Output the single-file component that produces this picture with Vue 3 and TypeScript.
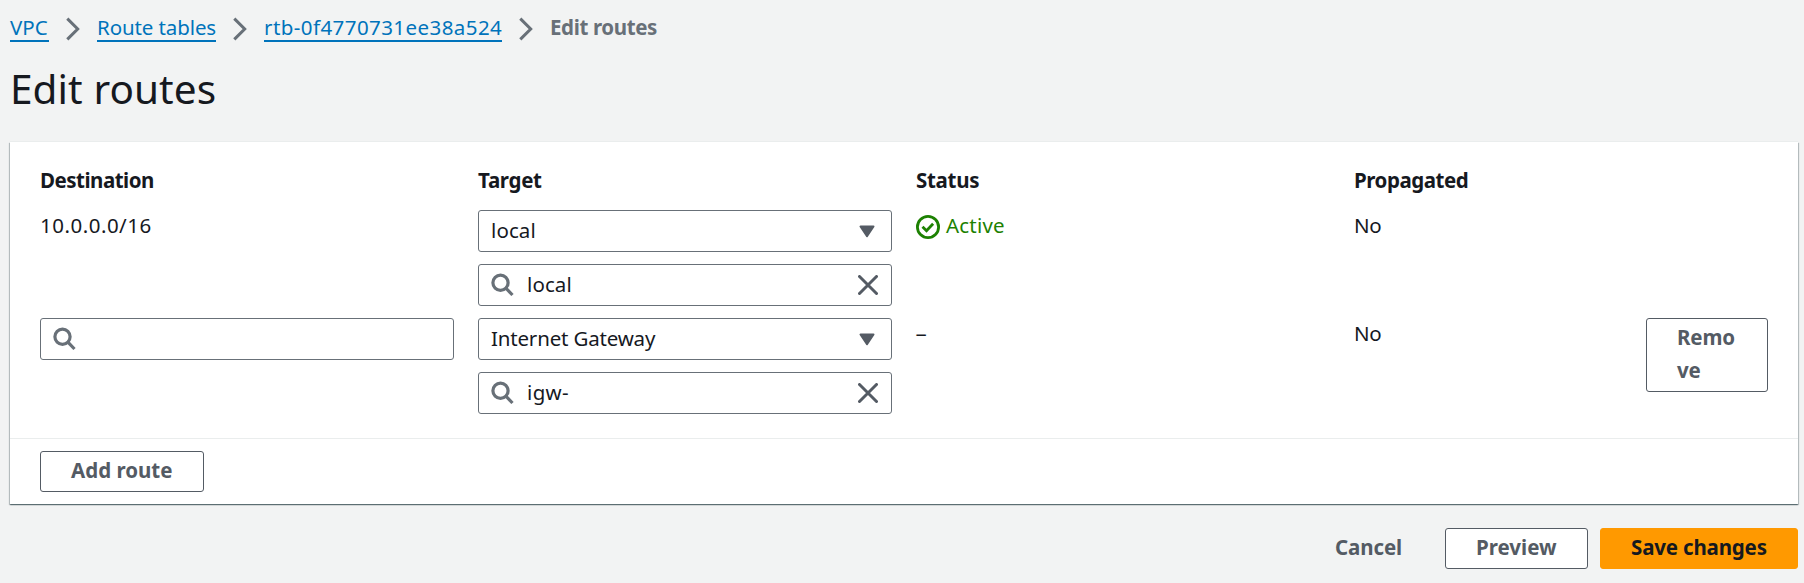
<script setup lang="ts">
import { ref } from 'vue'

interface Crumb {
  label: string
  cls: string
}

interface Route {
  editable: boolean
  destination: string
  targetType: string
  target: string
  targetCls: string
  active: boolean
  propagated: string
}

const crumbs: Crumb[] = [
  { label: 'VPC', cls: 'c-vpc' },
  { label: 'Route tables', cls: 'c-tables' },
  { label: 'rtb-0f4770731ee38a524', cls: 'c-id' },
]

const routes = ref<Route[]>([
  { editable: false, destination: '10.0.0.0/16', targetType: 'local', target: 'local', targetCls: 't-local', active: true, propagated: 'No' },
  { editable: true, destination: '', targetType: 'Internet Gateway', target: 'igw-', targetCls: 't-igw', active: false, propagated: 'No' },
])
</script>

<template>
  <div class="page">
    <nav class="crumbs">
      <template v-for="c in crumbs" :key="c.label">
        <a class="link" :class="c.cls"><span>{{ c.label }}</span></a>
        <svg class="chevron" width="14" height="24" viewBox="0 0 14 24"><path d="M1.3 1.6 11.7 12 1.3 22.4" /></svg>
      </template>
      <span class="current">Edit routes</span>
    </nav>
    <h1>Edit routes</h1>

    <section class="card">
      <div class="body">
        <div class="row head">
          <div class="h-dest">Destination</div>
          <div class="h-target">Target</div>
          <div>Status</div>
          <div class="h-prop">Propagated</div>
        </div>
        <div v-for="(r, i) in routes" :key="i" class="row">
          <div>
            <div v-if="r.editable" class="field">
              <svg class="search" width="24" height="24" viewBox="0 0 24 24"><circle cx="9.5" cy="9.8" r="7.6" /><path d="m14.9 15.2 6.6 6.8" /></svg>
            </div>
            <div v-else class="text dest">{{ r.destination }}</div>
          </div>
          <div class="stack">
            <div class="field">
              <span :class="r.editable ? 't-gateway' : 't-local'">{{ r.targetType }}</span>
              <svg class="caret" width="16" height="13" viewBox="0 0 16 13"><path d="M1.5 1.5h13L8 11.2z" /></svg>
            </div>
            <div class="field">
              <svg class="search" width="24" height="24" viewBox="0 0 24 24"><circle cx="9.5" cy="9.8" r="7.6" /><path d="m14.9 15.2 6.6 6.8" /></svg>
              <span class="value" :class="r.targetCls">{{ r.target }}</span>
              <svg class="clear" width="20" height="20" viewBox="0 0 20 20"><path d="m1.5 1.5 17 17M18.5 1.5l-17 17" /></svg>
            </div>
          </div>
          <div class="text">
            <span v-if="r.active" class="status">
              <svg width="24" height="24" viewBox="0 0 24 24"><circle cx="12" cy="12" r="10.6" /><path d="m6.5 11.7 4 4 6.6-6.9" /></svg>
              <span class="t-active">Active</span>
            </span>
            <span v-else class="dash">–</span>
          </div>
          <div class="text t-no">{{ r.propagated }}</div>
          <div>
            <button v-if="r.editable" class="btn remove">Remo<br>ve</button>
          </div>
        </div>
      </div>
      <div class="card-foot">
        <button class="btn add">Add route</button>
      </div>
    </section>

    <footer class="actions">
      <button class="btn cancel">Cancel</button>
      <button class="btn preview">Preview</button>
      <button class="btn save">Save changes</button>
    </footer>
  </div>
</template>

<style>
body {
  margin: 0;
  background: #f2f3f3;
}
</style>

<style scoped>
.page {
  box-sizing: border-box;
  width: 1804px;
  height: 583px;
  padding: 0 6px 0 10px;
  overflow: hidden;
  background: #f2f3f3;
  color: #16191f;
  font: 20.5px/33px "Noto Sans", "Open Sans", sans-serif;
  white-space: nowrap;
}
.crumbs {
  display: flex;
  align-items: flex-start;
  gap: 17px;
  height: 54px;
  padding-top: 11px;
  box-sizing: border-box;
}
.link {
  box-sizing: border-box;
  height: 31px;
  border-bottom: 2px solid #0073bb;
  color: #0073bb;
}
.c-vpc { width: 39px; }
.c-tables {
  width: 119px;
  letter-spacing: -0.1px;
}
.c-id {
  width: 238px;
  letter-spacing: 0.43px;
}
.chevron {
  margin-top: 6px;
  fill: none;
  stroke: #687078;
  stroke-width: 3;
}
.current {
  color: #687078;
  font-weight: 700;
  letter-spacing: -0.38px;
}
h1 {
  height: 88px;
  margin: 0;
  font-size: 40.5px;
  font-weight: 400;
  line-height: 70px;
  letter-spacing: 0.08px;
}
.card {
  box-sizing: border-box;
  height: 362px;
  background: #fff;
  box-shadow: 0 1px 1px 0 rgba(0, 28, 36, 0.4), 1px 1px 1px 0 rgba(0, 28, 36, 0.2), -1px 1px 1px 0 rgba(0, 28, 36, 0.2), 0 -1px 0 0 #eaeded;
}
.body {
  box-sizing: border-box;
  height: 297px;
  padding: 22px 30px 0;
  border-bottom: 1px solid #eaeded;
}
.row {
  display: grid;
  grid-template-columns: 414px 414px 414px 268px 122px;
  column-gap: 24px;
  height: 108px;
}
.head {
  height: 46px;
  font-weight: 700;
  letter-spacing: -0.3px;
}
.h-dest { letter-spacing: -0.5px; }
.h-prop { letter-spacing: -0.45px; }
.text { line-height: 31px; }
.dest { letter-spacing: 0.5px; }
.stack {
  display: flex;
  flex-direction: column;
  gap: 12px;
}
.field {
  display: flex;
  align-items: center;
  box-sizing: border-box;
  height: 42px;
  padding: 0 12px;
  border: 1px solid #687078;
  border-radius: 3px;
  line-height: 31px;
}
.field span { padding-bottom: 1px; }
.search {
  flex: none;
  fill: none;
  stroke: #687078;
  stroke-width: 3.2;
}
.value { margin-left: 12px; }
.t-gateway { letter-spacing: -0.18px; }
.t-local { letter-spacing: 0.1px; }
.t-igw { letter-spacing: 0.35px; }
.t-active { letter-spacing: 0.2px; }
.t-no { letter-spacing: -0.3px; }
.dash {
  display: inline-block;
  transform: scaleX(1.1);
}
.caret {
  margin: 0 4px 0 auto;
  fill: #545b64;
  stroke: #545b64;
  stroke-width: 2;
  stroke-linejoin: round;
}
.clear {
  margin: 0 1px 0 auto;
  fill: none;
  stroke: #545b64;
  stroke-width: 3;
  stroke-linecap: round;
}
.status {
  display: flex;
  align-items: center;
  gap: 6px;
  color: #1d8102;
}
.status svg {
  margin-top: 2px;
  fill: none;
  stroke: #1d8102;
  stroke-width: 2.8;
}
.btn {
  display: block;
  box-sizing: border-box;
  height: 41px;
  margin: 0;
  padding: 0 0 2px 30px;
  border: 1px solid #545b64;
  border-radius: 3px;
  background: #fff;
  color: #545b64;
  font: 700 20.5px/33px "Noto Sans", "Open Sans", sans-serif;
  text-align: left;
  white-space: nowrap;
}
.remove {
  width: 122px;
  height: 74px;
  letter-spacing: -0.15px;
}
.card-foot { padding: 12px 30px; }
.add { width: 164px; }
.actions {
  display: flex;
  justify-content: flex-end;
  gap: 12px;
  padding-top: 24px;
}
.cancel {
  width: 129px;
  border-color: transparent;
  background: transparent;
  letter-spacing: -0.1px;
}
.preview { width: 143px; }
.save {
  width: 198px;
  border-color: #ff9900;
  background: #ff9900;
  color: #16191f;
  letter-spacing: -0.17px;
}
</style>
